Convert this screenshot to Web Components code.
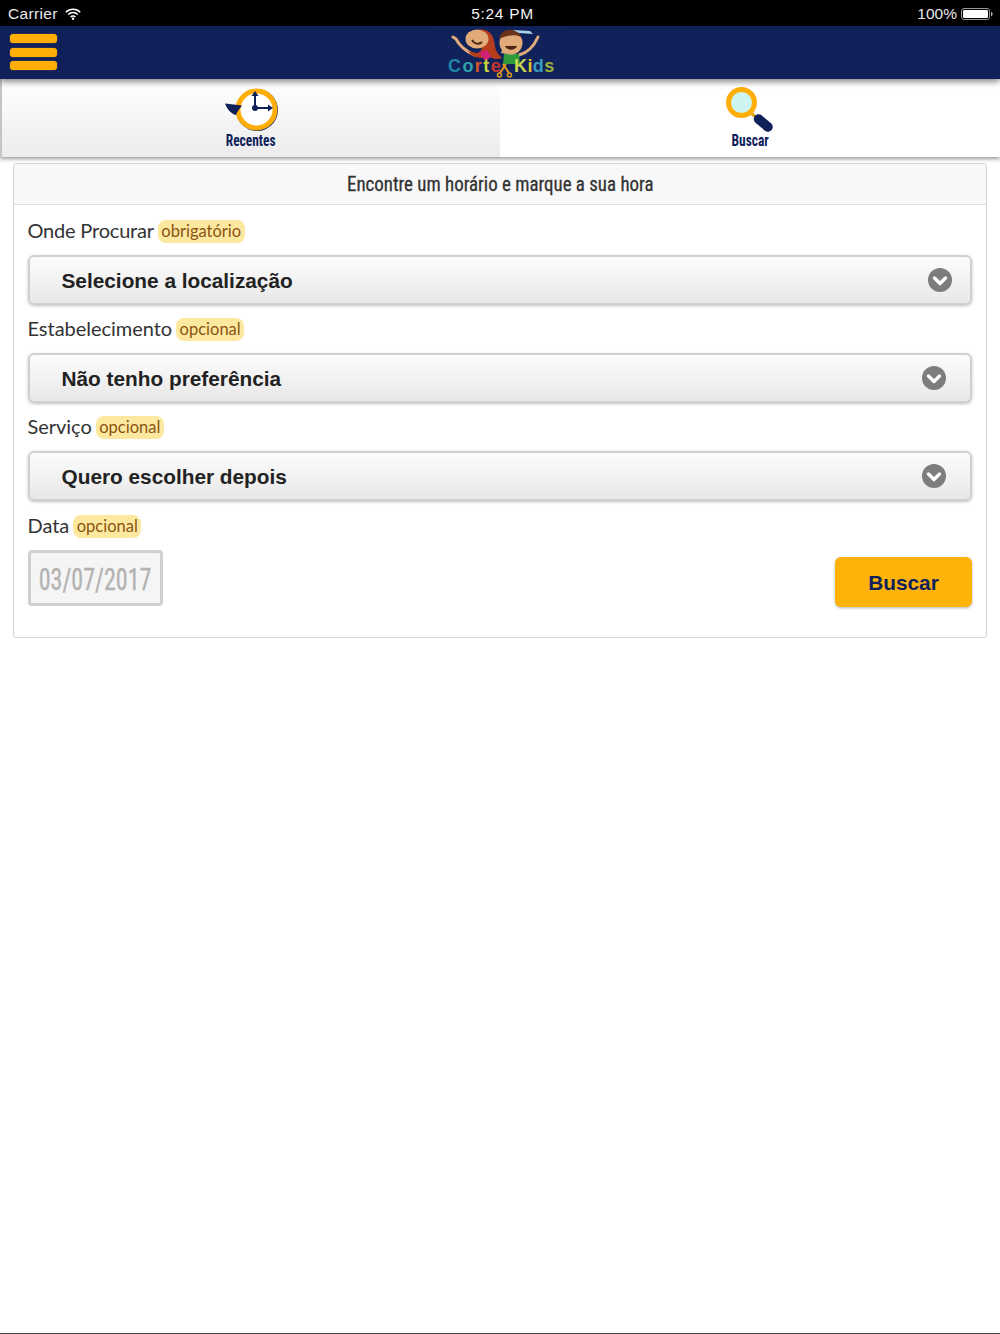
<!DOCTYPE html>
<html lang="pt"><head><meta charset="utf-8"><title>CorteKids</title>
<style>
html,body{margin:0;padding:0;background:#fff}
app-shell{height:1334px}
</style></head><body>
<app-shell>
  <status-bar></status-bar>
  <nav-bar></nav-bar>
  <tab-bar>
    <tab-item label="Recentes" icon="clock" active></tab-item>
    <tab-item label="Buscar" icon="lens"></tab-item>
  </tab-bar>
  <search-panel heading="Encontre um horário e marque a sua hora">
    <field-row label="Onde Procurar" tag="obrigatório" track="-.2px"><select-box text="Selecione a localização" pad="18"></select-box></field-row>
    <field-row label="Estabelecimento" tag="opcional"><select-box text="Não tenho preferência" pad="24"></select-box></field-row>
    <field-row label="Serviço" tag="opcional"><select-box text="Quero escolher depois" pad="24"></select-box></field-row>
    <date-row label="Data" tag="opcional" value="03/07/2017" action="Buscar"></date-row>
  </search-panel>
</app-shell>
<script>
const narrow = `"Liberation Sans Narrow","Roboto Condensed","Liberation Sans",sans-serif`;
function def(name, css, html){
  customElements.define(name, class extends HTMLElement{
    constructor(){super();this.attachShadow({mode:'open'});}
    connectedCallback(){
      const a = n => this.getAttribute(n) ?? '';
      this.shadowRoot.innerHTML = `<style>${css}</style>` + html(a, this);
    }
  });
}
def('app-shell', `:host{display:block;overflow:hidden;background:#fff;box-sizing:border-box;border-bottom:1px solid #444}`, () => `<slot></slot>`);

def('status-bar', `
:host{display:flex;align-items:center;justify-content:space-between;height:26px;background:#000;color:#e8e8e8;font:15.500px "Liberation Sans",sans-serif;padding:1px 7px 0 8px;box-sizing:border-box}
.l,.r{display:flex;align-items:center;flex:1}
.r{justify-content:flex-end;gap:4px}
.l{gap:7px;letter-spacing:.35px}
.t{letter-spacing:.7px;color:#f2f2f2;margin-left:4px}
`, () => `
<div class="l"><span>Carrier</span>
<svg width="16" height="12" viewBox="0 0 16 12"><path d="M.8 4.200A10 10 0 0 1 15.200 4.200M3.200 6.600A6.600 6.600 0 0 1 12.800 6.600M5.600 9A3.200 3.200 0 0 1 10.400 9" fill="none" stroke="#fff" stroke-width="1.500"/><circle cx="8" cy="10.700" r="1.200" fill="#fff"/></svg></div>
<div class="t">5:24 PM</div>
<div class="r"><span>100%</span>
<svg width="32" height="12" viewBox="0 0 32 12"><rect x=".5" y=".5" width="28" height="11" rx="2.500" fill="none" stroke="#999"/><rect x="2" y="2" width="25" height="8" rx="1.200" fill="#fff"/><path d="M30 4v4c1 0 1.600-.8 1.600-2S31 4 30 4z" fill="#bbb"/></svg></div>`);

def('nav-bar', `
:host{display:flex;align-items:center;height:53px;background:#10215a;position:relative;z-index:2;box-shadow:0 3px 6px rgba(0,0,0,.45)}
.m{display:flex;flex-direction:column;gap:4.500px;margin:-1px 0 0 10px;width:47px}
.m i{display:block;height:9px;background:#ffae08;border-radius:3.500px;box-shadow:0 0 1px #ffae08}
.logo{position:absolute;left:435px;top:0;width:130px;height:53px;background:#11225b}
text{font:bold 18px "Liberation Sans",sans-serif;letter-spacing:1.400px}
.k{letter-spacing:.4px}
`, () => `
<div class="m"><i></i><i></i><i></i></div>
<div class="logo"><svg width="130" height="53" viewBox="0 0 130 53">
<path d="M18 11l3 2c3 6 10 12 18 16" fill="none" stroke="#e0ab78" stroke-width="3" stroke-linecap="round"/>
<path d="M84 29c8-2 15-9 19-18" fill="none" stroke="#e0ab78" stroke-width="3" stroke-linecap="round"/>
<path d="M36 8c4-5 12-6 18-2 6 5 5 12 7 18 1 3 4 6 6 8-4 2-9 1-12-1-6 2-14 1-19-2l-3-4 8 2c4 0 7-3 5-8z" fill="#b53c1c"/>
<ellipse cx="42" cy="13" rx="11.500" ry="9.500" fill="#e0ab78"/>
<path d="M37 14c2 4 7 5 10 2" stroke="#4c2412" stroke-width="1.800" fill="none"/>
<path d="M44 26l8-2 4 7-6 4z" fill="#d21f78"/>
<path d="M69 28h15l1 10H68z" fill="#2f9a3b"/>
<path d="M66 27l3-8 2 9z" fill="#e0ab78"/>
<ellipse cx="76" cy="17" rx="11.500" ry="11.500" fill="#e0ab78"/>
<path d="M64 13c1-6 6-10 13-9 5 .5 8 3 9 7-6-3-14-2-22 2z" fill="#6a3319"/>
<path d="M78 4l17 1 3 3-14-1z" fill="#a6d3e6"/>
<path d="M70 20c2 5 10 5 12 0z" fill="#4c2412"/>
<text y="45.500" x="13"><tspan fill="#1f87a8">C</tspan><tspan fill="#2aa0a8">o</tspan><tspan fill="#d5572a">r</tspan><tspan fill="#c5d43a">t</tspan><tspan fill="#c8342c">e</tspan></text>
<path d="M65 47l6-9M74 47l-6-9" stroke="#e29a1c" stroke-width="2"/><circle cx="64.500" cy="49" r="2" fill="none" stroke="#e29a1c" stroke-width="1.500"/><circle cx="74.500" cy="49" r="2" fill="none" stroke="#e29a1c" stroke-width="1.500"/>
<text class="k" y="45.500" x="79"><tspan fill="#c9d84a">K</tspan><tspan fill="#e2c229">i</tspan><tspan fill="#3a9ac0">d</tspan><tspan fill="#9caf38">s</tspan></text>
</svg></div>`);

def('tab-bar', `
:host{display:flex;height:78px;position:relative;z-index:1;box-shadow:0 2px 4px rgba(0,0,0,.4)}
::slotted(tab-item){flex:0 0 50%}
`, () => `<slot></slot>`);

const icons = {
clock:`<svg width="56" height="46" viewBox="0 0 56 46"><circle cx="34" cy="24" r="21" fill="#10215a"/><circle cx="33.500" cy="23.500" r="18.500" fill="#fff" stroke="#ffae08" stroke-width="5"/><path d="M32 22V8M32 22h14" stroke="#10215a" stroke-width="2"/><path d="M28.500 10L32 5l3.500 5zM45 18.500l5 3.500-5 3.500z" fill="#10215a"/><circle cx="32" cy="22" r="3" fill="#10215a"/><path d="M2 17.500l17 2c-2 3-5 6-6 9.500C8 28 4 23 2 17.500z" fill="#10215a"/></svg>`,
lens:`<svg width="52" height="46" viewBox="0 0 52 46"><path d="M27 27l8 7" stroke="#d9a520" stroke-width="3"/><path d="M34.500 33l9.500 8" stroke="#10215a" stroke-width="9.500" stroke-linecap="round"/><circle cx="17.500" cy="16.500" r="13" fill="#ccf5f1" stroke="#ffae08" stroke-width="5"/></svg>`};

def('tab-item', `
:host{display:flex;flex-direction:column;align-items:center;box-sizing:border-box;padding-top:7px;background:#fff;color:#10215a}
:host([active]){background:linear-gradient(#fff,#ececec);border-left:2px solid #c4c4c4}
svg{display:block}
.l{font:bold 16px/16px ${narrow};margin-top:1px;transform:scaleX(.84)}
`, a => `${icons[a('icon')]}<div class="l">${a('label')}</div>`);

def('search-panel', `
:host{display:block;box-sizing:border-box;margin:6px 13px 0;height:475px;border:1px solid #d4d4d4;border-radius:3px;overflow:hidden}
.h{height:41px;box-sizing:border-box;background:#f8f8f8;border-bottom:1px solid #dcdcdc;display:flex;align-items:center;justify-content:center;color:#333}
.h span{font:21px ${narrow};transform:scaleX(.9);white-space:nowrap;-webkit-text-stroke:.3px #333}
.b{padding:14px 14px 0;display:flex;flex-direction:column;gap:12px}
`, a => `<div class="h"><span>${a('heading')}</span></div><div class="b"><slot></slot></div>`);

const tagCss = `
.lab{display:flex;align-items:flex-start;gap:4px;height:24px;font:20px/22px Lato,sans-serif;letter-spacing:-.03px;color:#333;margin-left:-.5px}
.tag{font-size:16.500px;letter-spacing:0;line-height:23px;padding:0 3.500px;border-radius:8px;background:#fde8a0;color:#8a5410;margin-top:1px}`;

def('field-row', `:host{display:flex;flex-direction:column;gap:12px}${tagCss}`,
 a => `<div class="lab" style="${a('track') ? 'letter-spacing:' + a('track') : ''}">${a('label')}<span class="tag">${a('tag')}</span></div><slot></slot>`);

def('select-box', `
:host{display:flex;align-items:center;justify-content:space-between;box-sizing:border-box;height:50px;border:2px solid #d0d0d0;border-radius:6px;background:linear-gradient(#fcfcfc,#e8e8e8);box-shadow:0 1px 3px rgba(0,0,0,.25);padding-left:31.500px;font:bold 20.800px "Liberation Sans",sans-serif;color:#222}
span{padding-top:2px}
`, (a,el) => { el.style.paddingRight = a('pad') + 'px'; return `<span>${a('text')}</span>
<svg width="24" height="24" viewBox="0 0 24 24"><circle cx="12" cy="12" r="12" fill="#7d7d7d"/><path d="M6.500 10l5.500 5.500 5.500-5.500" fill="none" stroke="#fff" stroke-width="3.400" stroke-linecap="round" stroke-linejoin="round"/></svg>`;});

def('date-row', `
:host{display:flex;flex-direction:column;gap:12px;margin-top:1px}${tagCss}
.r{display:flex;justify-content:space-between;align-items:flex-start}
.d{box-sizing:border-box;width:135px;height:56px;border:3px solid #cfcfcf;border-radius:4px;background:#f5f5f5;color:#b3b3b3;display:flex;align-items:center;justify-content:center}
.d span{font:32px ${narrow};transform:scaleX(.75);padding-top:1px;-webkit-text-stroke:.4px #b3b3b3}
.btn{box-sizing:border-box;width:137px;height:50px;margin-top:7px;border-radius:6px;background:#ffb30a;color:#10215a;font:bold 20.800px/52px "Liberation Sans",sans-serif;text-align:center;box-shadow:0 1px 3px rgba(0,0,0,.3)}
`, a => `<div class="lab">${a('label')}<span class="tag">${a('tag')}</span></div><div class="r"><div class="d"><span>${a('value')}</span></div><div class="btn">${a('action')}</div></div>`);
</script>
</body></html>
